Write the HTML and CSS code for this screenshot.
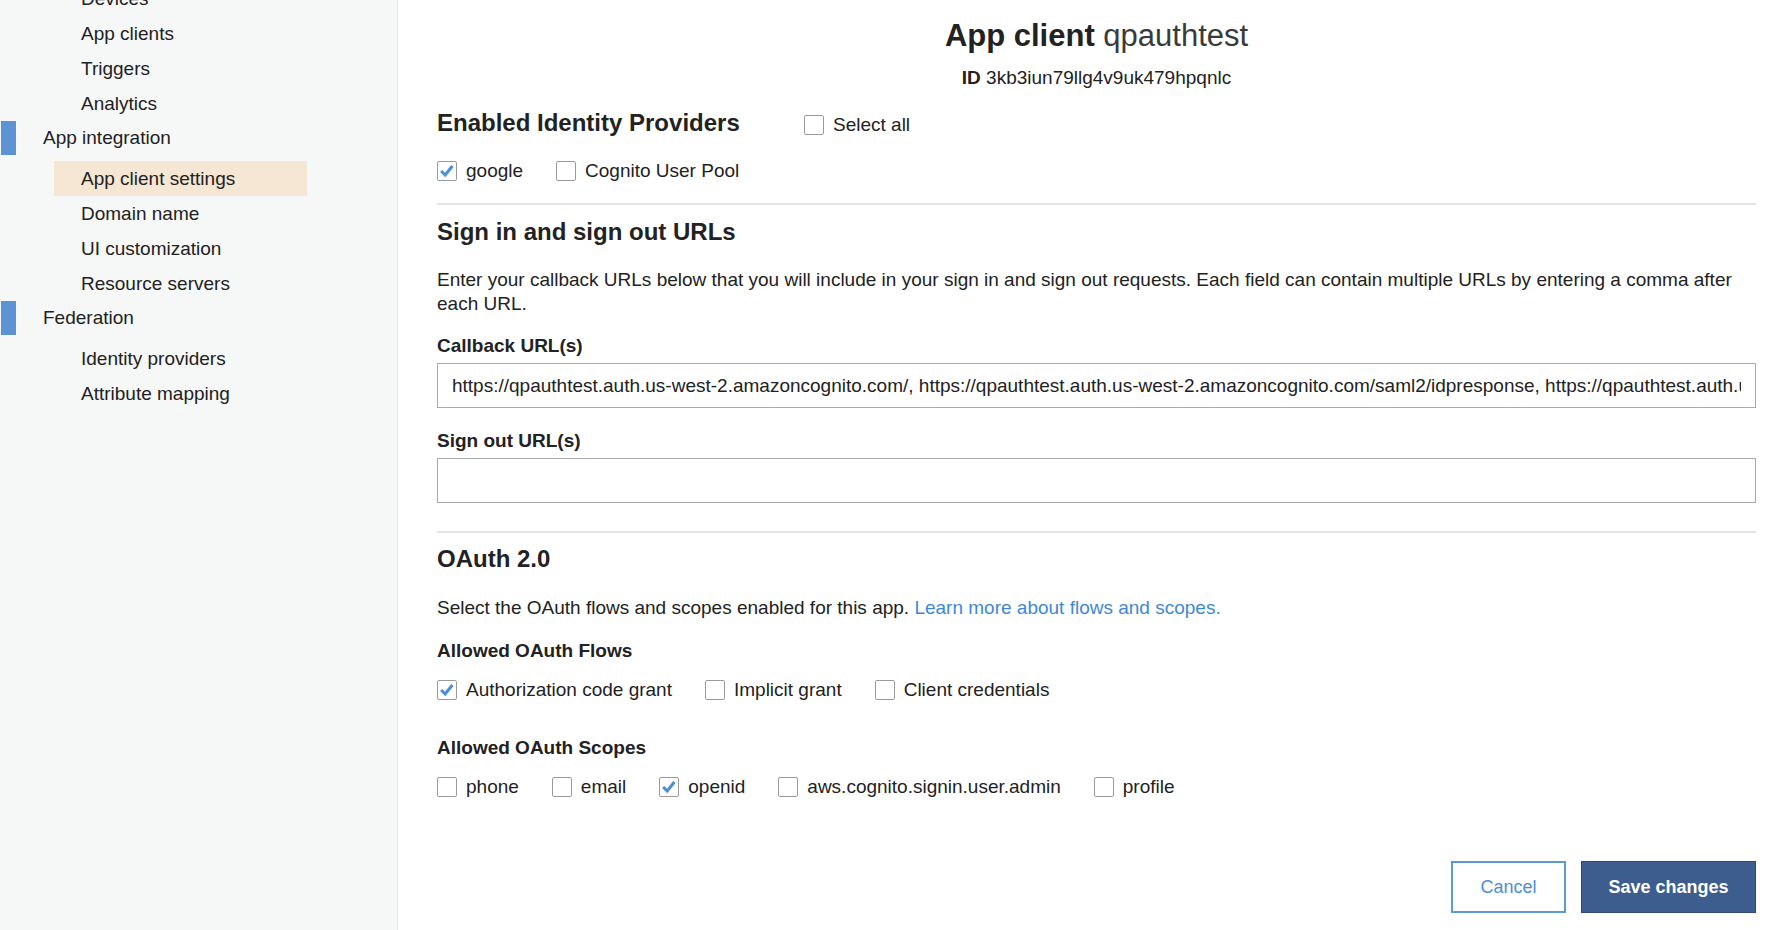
FILE: index.html
```html
<!DOCTYPE html>
<html lang="en">
<head>
  <meta charset="UTF-8" />
  <title>App client settings</title>
  <link rel="stylesheet" href="styles.css">
</head>
<body>
  <div class="sidebar">
    <ul class="nav">
      <li class="nav-item">Devices</li>
      <li class="nav-item">App clients</li>
      <li class="nav-item">Triggers</li>
      <li class="nav-item">Analytics</li>
      <li class="nav-group">App integration</li>
      <li class="nav-item active">App client settings</li>
      <li class="nav-item">Domain name</li>
      <li class="nav-item">UI customization</li>
      <li class="nav-item">Resource servers</li>
      <li class="nav-group">Federation</li>
      <li class="nav-item">Identity providers</li>
      <li class="nav-item">Attribute mapping</li>
    </ul>
  </div>

  <div class="main">
    <h1 class="title">App client <span class="light">qpauthtest</span></h1>
    <div class="client-id"><b>ID</b> 3kb3iun79llg4v9uk479hpqnlc</div>

    <div class="providers-head">
      <h2>Enabled Identity Providers</h2>
      <label class="check select-all"><span class="box"></span>Select all</label>
    </div>
    <div class="check-row providers">
      <label class="check"><span class="box"><svg viewBox="0 0 20 20"><polyline points="3.5,10 8,14.5 16,4.5"/></svg></span>google</label>
      <label class="check"><span class="box"></span>Cognito User Pool</label>
    </div>

    <hr class="divider first">

    <h2 class="section-title">Sign in and sign out URLs</h2>
    <p class="intro">Enter your callback URLs below that you will include in your sign in and sign out requests. Each field can contain multiple URLs by entering a comma after each URL.</p>

    <div class="field-label">Callback URL(s)</div>
    <input class="field" type="text" value="https://qpauthtest.auth.us-west-2.amazoncognito.com/, https://qpauthtest.auth.us-west-2.amazoncognito.com/saml2/idpresponse, https://qpauthtest.auth.us-west-2.amazoncognito.com/oauth2/idpresponse">

    <div class="field-label second">Sign out URL(s)</div>
    <input class="field" type="text" value="">

    <hr class="divider">

    <h2 class="section-title oauth">OAuth 2.0</h2>
    <p class="oauth-intro">Select the OAuth flows and scopes enabled for this app. <a href="#">Learn more about flows and scopes.</a></p>

    <div class="field-label flows-label">Allowed OAuth Flows</div>
    <div class="check-row sub">
      <label class="check"><span class="box"><svg viewBox="0 0 20 20"><polyline points="3.5,10 8,14.5 16,4.5"/></svg></span>Authorization code grant</label>
      <label class="check"><span class="box"></span>Implicit grant</label>
      <label class="check"><span class="box"></span>Client credentials</label>
    </div>

    <div class="field-label scopes-label">Allowed OAuth Scopes</div>
    <div class="check-row sub">
      <label class="check"><span class="box"></span>phone</label>
      <label class="check"><span class="box"></span>email</label>
      <label class="check"><span class="box"><svg viewBox="0 0 20 20"><polyline points="3.5,10 8,14.5 16,4.5"/></svg></span>openid</label>
      <label class="check"><span class="box"></span>aws.cognito.signin.user.admin</label>
      <label class="check"><span class="box"></span>profile</label>
    </div>

    <div class="actions">
      <button class="btn btn-cancel">Cancel</button>
      <button class="btn btn-save">Save changes</button>
    </div>
  </div>
</body>
</html>
```

FILE: styles.css
```css
:root {
  --text: #222;
  --blue: #3d88d6;
  --bar: #5b93d4;
  --line: #e2e3e3;
  --box: #999c9e;
}

* {
  box-sizing: border-box;
  margin: 0;
  padding: 0;
}

body {
  font-family: "Liberation Sans", Arial, sans-serif;
  font-size: 19px;
  color: var(--text);
  background: #fff;
  display: flex;
  height: 100vh;
  overflow: hidden;
}

/* left menu */
.sidebar {
  width: 398px;
  flex-shrink: 0;
  background: #f6f7f7;
  border-right: 1px solid #e6e8e8;
}

.nav {
  list-style: none;
  margin-top: -19px;
}

.nav-item {
  height: 35px;
  line-height: 35px;
  margin-left: 54px;
  width: 253px;
  padding-left: 27px;
}

.nav-item.active {
  background: #f6e6d4;
}

.nav-group {
  height: 34px;
  line-height: 34px;
  margin-left: 1px;
  margin-bottom: 6px;
  border-left: 15px solid var(--bar);
  padding-left: 27px;
}

/* content */
.main {
  flex: 1;
  padding: 16px 35px 0 39px;
}

.title {
  font-size: 31px;
  line-height: 40px;
  font-weight: bold;
  text-align: center;
}

.title .light {
  font-weight: normal;
  color: #3a3a3a;
}

.client-id {
  margin-top: 10px;
  line-height: 24px;
  text-align: center;
}

.providers-head {
  margin-top: 18px;
  height: 30px;
  display: flex;
  align-items: center;
}

.providers-head h2 {
  width: 367px;
  font-size: 24px;
  line-height: 30px;
}

.select-all {
  margin-top: 4px;
}

.check-row {
  display: flex;
  height: 20px;
}

.check-row.providers {
  margin-top: 23px;
}

.check-row.sub {
  margin-top: 17px;
}

.check {
  display: flex;
  align-items: center;
  height: 20px;
  margin-right: 33px;
}

.box {
  width: 20px;
  height: 20px;
  border: 1px solid var(--box);
  border-radius: 2px;
  background: #fff;
  margin-right: 9px;
  flex-shrink: 0;
}

.box svg {
  display: block;
  width: 18px;
  height: 18px;
}

.box polyline {
  fill: none;
  stroke: #4a8fd9;
  stroke-width: 3.4;
  stroke-linecap: butt;
  stroke-linejoin: miter;
}

.divider {
  border: none;
  height: 2px;
  background: var(--line);
  margin-top: 28px;
}

.divider.first {
  margin-top: 22px;
}

.section-title {
  font-size: 24px;
  line-height: 30px;
  margin-top: 12px;
}

.section-title.oauth {
  margin-top: 11px;
}

.intro {
  margin-top: 21px;
  line-height: 24px;
}

.oauth-intro {
  margin-top: 22px;
  line-height: 24px;
}

.oauth-intro a {
  color: var(--blue);
  text-decoration: none;
}

.field-label {
  font-weight: bold;
  line-height: 24px;
  margin-top: 18px;
}

.field-label.second {
  margin-top: 21px;
}

.field-label.flows-label {
  margin-top: 19px;
}

.field-label.scopes-label {
  margin-top: 36px;
}

.field {
  display: block;
  width: 100%;
  height: 45px;
  margin-top: 5px;
  padding: 0 14px;
  border: 1px solid #a6aaad;
  border-radius: 0;
  font: inherit;
  color: var(--text);
  outline: none;
}

.actions {
  margin-top: 64px;
  display: flex;
  justify-content: flex-end;
  gap: 15px;
}

.btn {
  height: 52px;
  font-family: inherit;
  font-size: 18px;
  cursor: pointer;
}

.btn-cancel {
  width: 115px;
  background: #fff;
  border: 2px solid #5b9ad8;
  color: #4a8fd4;
}

.btn-save {
  width: 175px;
  background: #3d5d8e;
  border: 1px solid #2e4a78;
  color: #fff;
  font-weight: bold;
}
```
